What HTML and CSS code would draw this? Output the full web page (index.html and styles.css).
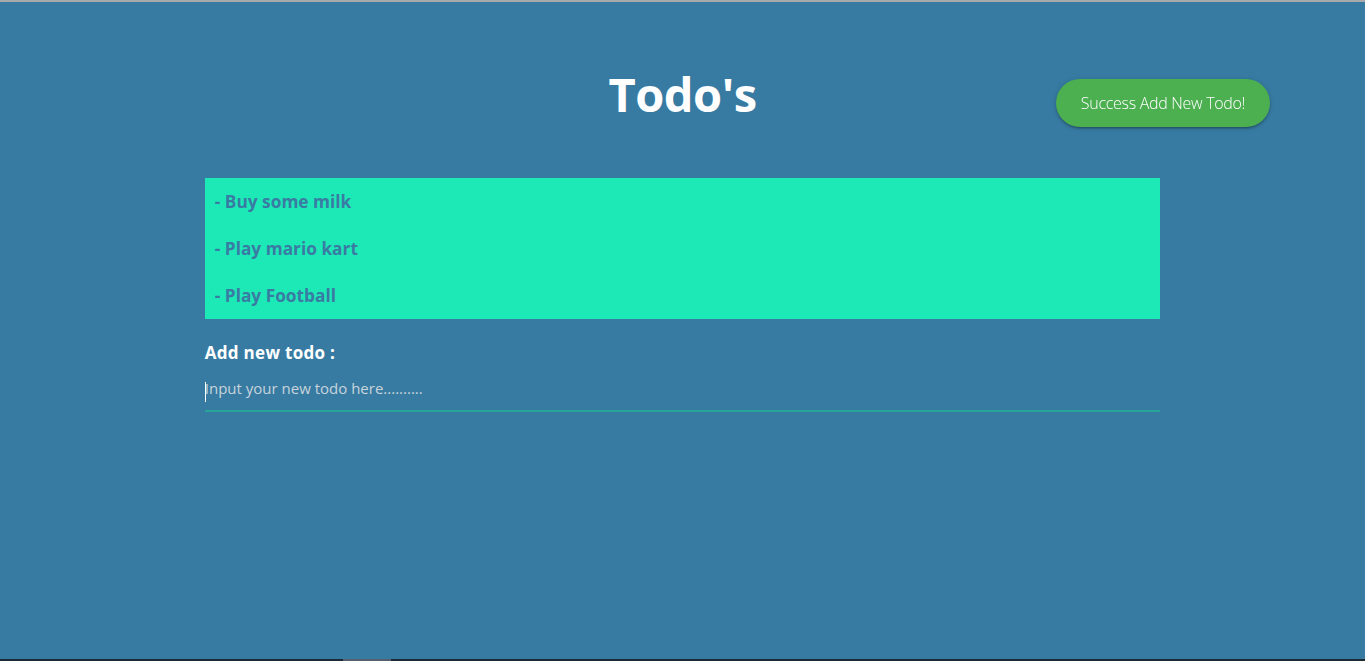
FILE: index.html
```html
<!DOCTYPE html>
<html lang="en">
<head>
<meta charset="utf-8">
<title>Todo's</title>
<link rel="stylesheet" href="styles.css">
</head>
<body>
<div class="topline"></div>
<main class="page">
  <h1 class="title">Todo's</h1>
  <div class="container">
    <ul class="todos">
      <li class="todo">- Buy some milk</li>
      <li class="todo">- Play mario kart</li>
      <li class="todo">- Play Football</li>
    </ul>
    <form class="add-form">
      <label class="add-label" for="newtodo">Add new todo :</label>
      <div class="field"><span class="caret"></span><input id="newtodo" class="add-input" type="text" placeholder="Input your new todo here.........."></div>
    </form>
  </div>
</main>
<div class="toast-container">
  <div class="toast">Success Add New Todo!</div>
</div>
<div class="bottomline"><span class="bottom-tab"></span></div>
</body>
</html>
```

FILE: styles.css
```css
html, body {
  margin: 0;
  padding: 0;
  height: 100%;
}
body {
  background: #377ba3;
  font-family: "Open Sans", "Noto Sans", "Liberation Sans", sans-serif;
  display: flex;
  flex-direction: column;
  overflow: hidden;
}
.topline {
  height: 2px;
  background: #a9aaab;
  flex: none;
}
.page {
  flex: 1;
}
.title {
  margin: 0;
  padding: 59px 0 51px;
  text-align: center;
  color: #fff;
  font-size: 47px;
  font-weight: 700;
  line-height: 66px;
  letter-spacing: -0.5px;
}
.container {
  width: 70%;
  margin: 0 auto;
}
.todos {
  list-style: none;
  margin: 0;
  padding: 0;
  background: #1de9b6;
}
.todo {
  height: 47px;
  line-height: 47px;
  padding-left: 10px;
  color: #3a7ba3;
  font-size: 17.3px;
  font-weight: 700;
}
.add-form {
  margin-top: 22px;
}
.add-label {
  display: block;
  color: #fff;
  font-size: 17px;
  font-weight: 700;
  line-height: 24px;
  letter-spacing: 0.3px;
}
.field {
  position: relative;
  margin-top: 2px;
}
.caret {
  position: absolute;
  left: 0;
  top: 15px;
  width: 1px;
  height: 20px;
  background: #fff;
}
.add-input {
  display: block;
  width: 100%;
  box-sizing: border-box;
  height: 44px;
  margin: 0;
  padding: 0 0 2px;
  border: none;
  border-bottom: 1px solid #26a69a;
  box-shadow: 0 1px 0 0 #26a69a;
  background: transparent;
  outline: none;
  color: #fff;
  font-family: inherit;
  font-size: 15px;
}
.add-input::placeholder {
  color: #c8d3da;
}
.toast-container {
  position: fixed;
  top: 79px;
  right: 95px;
}
.toast {
  box-sizing: border-box;
  width: 214px;
  height: 48px;
  border-radius: 24px;
  background: #4caf50;
  color: #fff;
  display: flex;
  align-items: center;
  justify-content: center;
  font-size: 16px;
  font-weight: 300;
  letter-spacing: -0.3px;
  box-shadow: 0 2px 2px 0 rgba(0,0,0,0.14), 0 3px 1px -2px rgba(0,0,0,0.12), 0 1px 5px 0 rgba(0,0,0,0.2);
}
.bottomline {
  flex: none;
  height: 2px;
  background: #1e2a33;
  display: flex;
}
.bottom-tab {
  margin-left: 343px;
  width: 48px;
  background: #55606a;
}
```
